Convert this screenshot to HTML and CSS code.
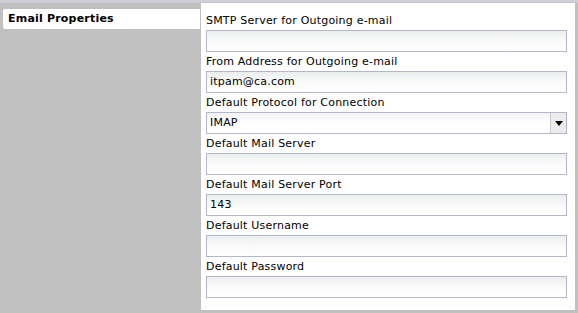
FILE: index.html
```html
<!DOCTYPE html>
<html>
<head>
    <title>Email Properties</title>
    <link rel="stylesheet" href="styles.css">
</head>
<body>
    <div class="topbar"></div>
    <div class="main">
        <div class="sidebar">
            <div class="tab">Email Properties</div>
        </div>
        <div class="panel">
            <div class="field">
                <label for="smtp">SMTP Server for Outgoing e-mail</label>
                <div id="smtp" class="input"></div>
            </div>
            <div class="field">
                <label for="from">From Address for Outgoing e-mail</label>
                <div id="from" class="input">itpam@ca.com</div>
            </div>
            <div class="field">
                <label for="protocol">Default Protocol for Connection</label>
                <div id="protocol" class="input select">
                    <span>IMAP</span>
                    <span class="arrow"><span class="tri"></span></span>
                </div>
            </div>
            <div class="field">
                <label for="server">Default Mail Server</label>
                <div id="server" class="input"></div>
            </div>
            <div class="field">
                <label for="port">Default Mail Server Port</label>
                <div id="port" class="input">143</div>
            </div>
            <div class="field">
                <label for="user">Default Username</label>
                <div id="user" class="input"></div>
            </div>
            <div class="field">
                <label for="pass">Default Password</label>
                <div id="pass" class="input"></div>
            </div>
        </div>
    </div>
</body>
</html>
```

FILE: styles.css
```css
body {
    margin: 0;
    padding: 0;
    width: 578px;
    height: 313px;
    background-color: #c0c0c0;
    font-family: "DejaVu Sans", Verdana, sans-serif;
    font-size: 11px;
    letter-spacing: 0.2px;
    color: #000;
    overflow: hidden;
}
.topbar {
    height: 2px;
    background-color: #d0d0d0;
    border-bottom: 1px solid #c4c8dc;
}
.main {
    display: flex;
    height: 307px;
}
.sidebar {
    width: 201px;
}
.tab {
    margin: 6px 1px 0 3px;
    height: 20px;
    line-height: 19px;
    padding-left: 5px;
    background-color: #fff;
    font-weight: bold;
    border-radius: 2px 0 0 2px;
}
.panel {
    width: 369px;
    background-color: #fff;
    padding: 9px 0 0 5px;
    box-sizing: content-box;
}
.field label {
    display: block;
    height: 17px;
    line-height: 17px;
    margin-bottom: 1px;
}
.input {
    box-sizing: border-box;
    width: 361px;
    height: 22px;
    margin-bottom: 1px;
    border: 1px solid #b4b6cc;
    background: linear-gradient(#eceeee, #fbfbfb 55%, #fff);
    padding: 0 3px;
    line-height: 20px;
}
.select {
    display: flex;
    justify-content: space-between;
    padding-right: 0;
    background: linear-gradient(#f4f4f4, #fff 60%);
}
.arrow {
    width: 15px;
    height: 20px;
    background-color: #ececec;
    border-left: 1px solid #c8c8d4;
    display: flex;
    align-items: center;
    justify-content: center;
}
.tri {
    width: 0;
    height: 0;
    border-left: 4px solid transparent;
    border-right: 4px solid transparent;
    border-top: 5px solid #000;
}
```
